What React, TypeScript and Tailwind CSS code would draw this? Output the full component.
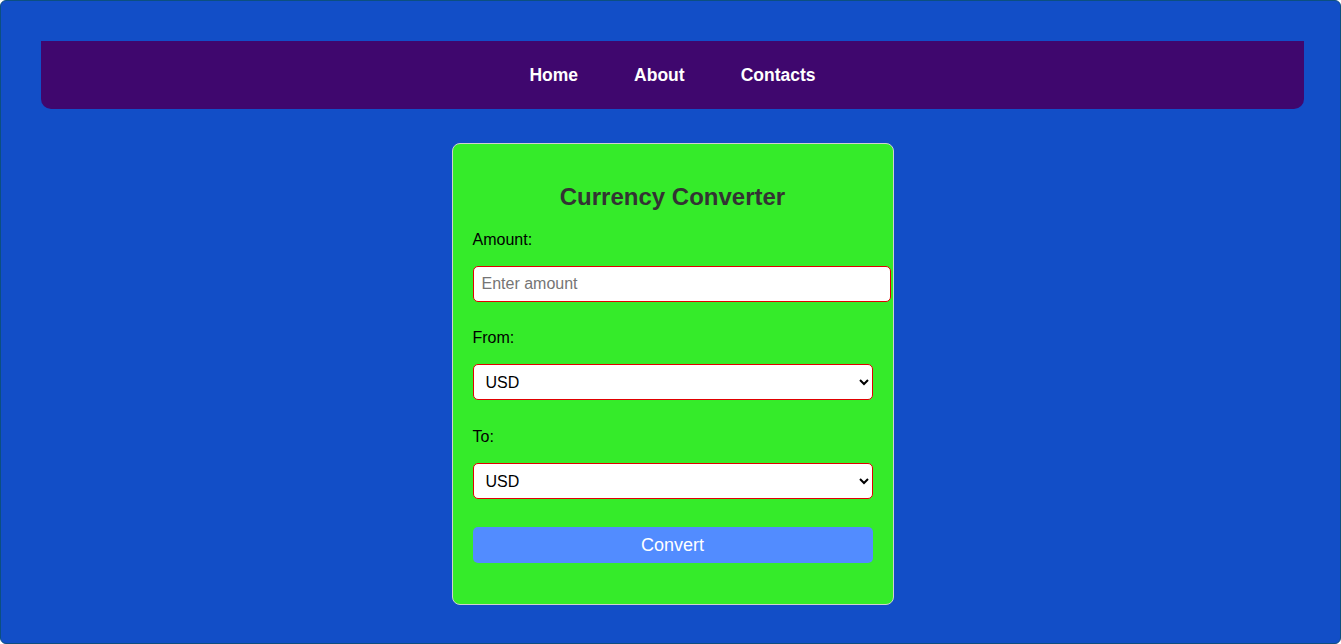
import React from 'react'

const currencies = ['USD', 'EUR', 'GBP', 'JPY', 'INR']

export default function App() {
  return (
    <div className="h-[644px] w-full overflow-hidden rounded-[6px] border border-[#0c4f80] bg-[#124ec7] pl-[40px] pt-[40px] font-['Liberation_Sans',Arial,sans-serif]">
      <div className="w-[1263px]">
        <nav className="flex h-[68px] items-center justify-center gap-[56px] rounded-b-[10px] bg-[#3f076e]">
          <a className="text-[17.5px] font-bold text-white" href="#">Home</a>
          <a className="text-[17.5px] font-bold text-white" href="#">About</a>
          <a className="text-[17.5px] font-bold text-white" href="#">Contacts</a>
        </nav>

        <div className="mx-auto mt-[34px] w-[442px] rounded-[8px] border border-[#d0d0d0] bg-[#35eb2a] px-[20px] pb-[21px] pt-[20px]">
          <h2 className="mt-[19px] mb-[20px] text-center text-[24px] font-bold leading-[28px] text-[#333]">Currency Converter</h2>

          <label className="block text-[16px] leading-[18px] text-black">Amount:</label>
          <input
            type="number"
            placeholder="Enter amount"
            className="mt-[17px] box-content h-[18px] w-[400px] rounded-[5px] border border-[#e00000] bg-white px-[8px] py-[8px] text-[16px] leading-[18px] outline-none placeholder:text-[#757575]"
          />

          <label className="mt-[27px] block text-[16px] leading-[18px] text-black">From:</label>
          <select className="mt-[17px] h-[36px] w-[400px] rounded-[5px] border border-[#e00000] bg-white px-[8px] text-[16px] text-black">
            {currencies.map((c) => (
              <option key={c}>{c}</option>
            ))}
          </select>

          <label className="mt-[28px] block text-[16px] leading-[18px] text-black">To:</label>
          <select className="mt-[17px] h-[36px] w-[400px] rounded-[5px] border border-[#e00000] bg-white px-[8px] text-[16px] text-black">
            {currencies.map((c) => (
              <option key={c}>{c}</option>
            ))}
          </select>

          <button className="mt-[28px] mb-[20px] block h-[36px] w-[400px] rounded-[5px] bg-[#528cff] text-[18px] text-white">
            Convert
          </button>
        </div>
      </div>
    </div>
  )
}
